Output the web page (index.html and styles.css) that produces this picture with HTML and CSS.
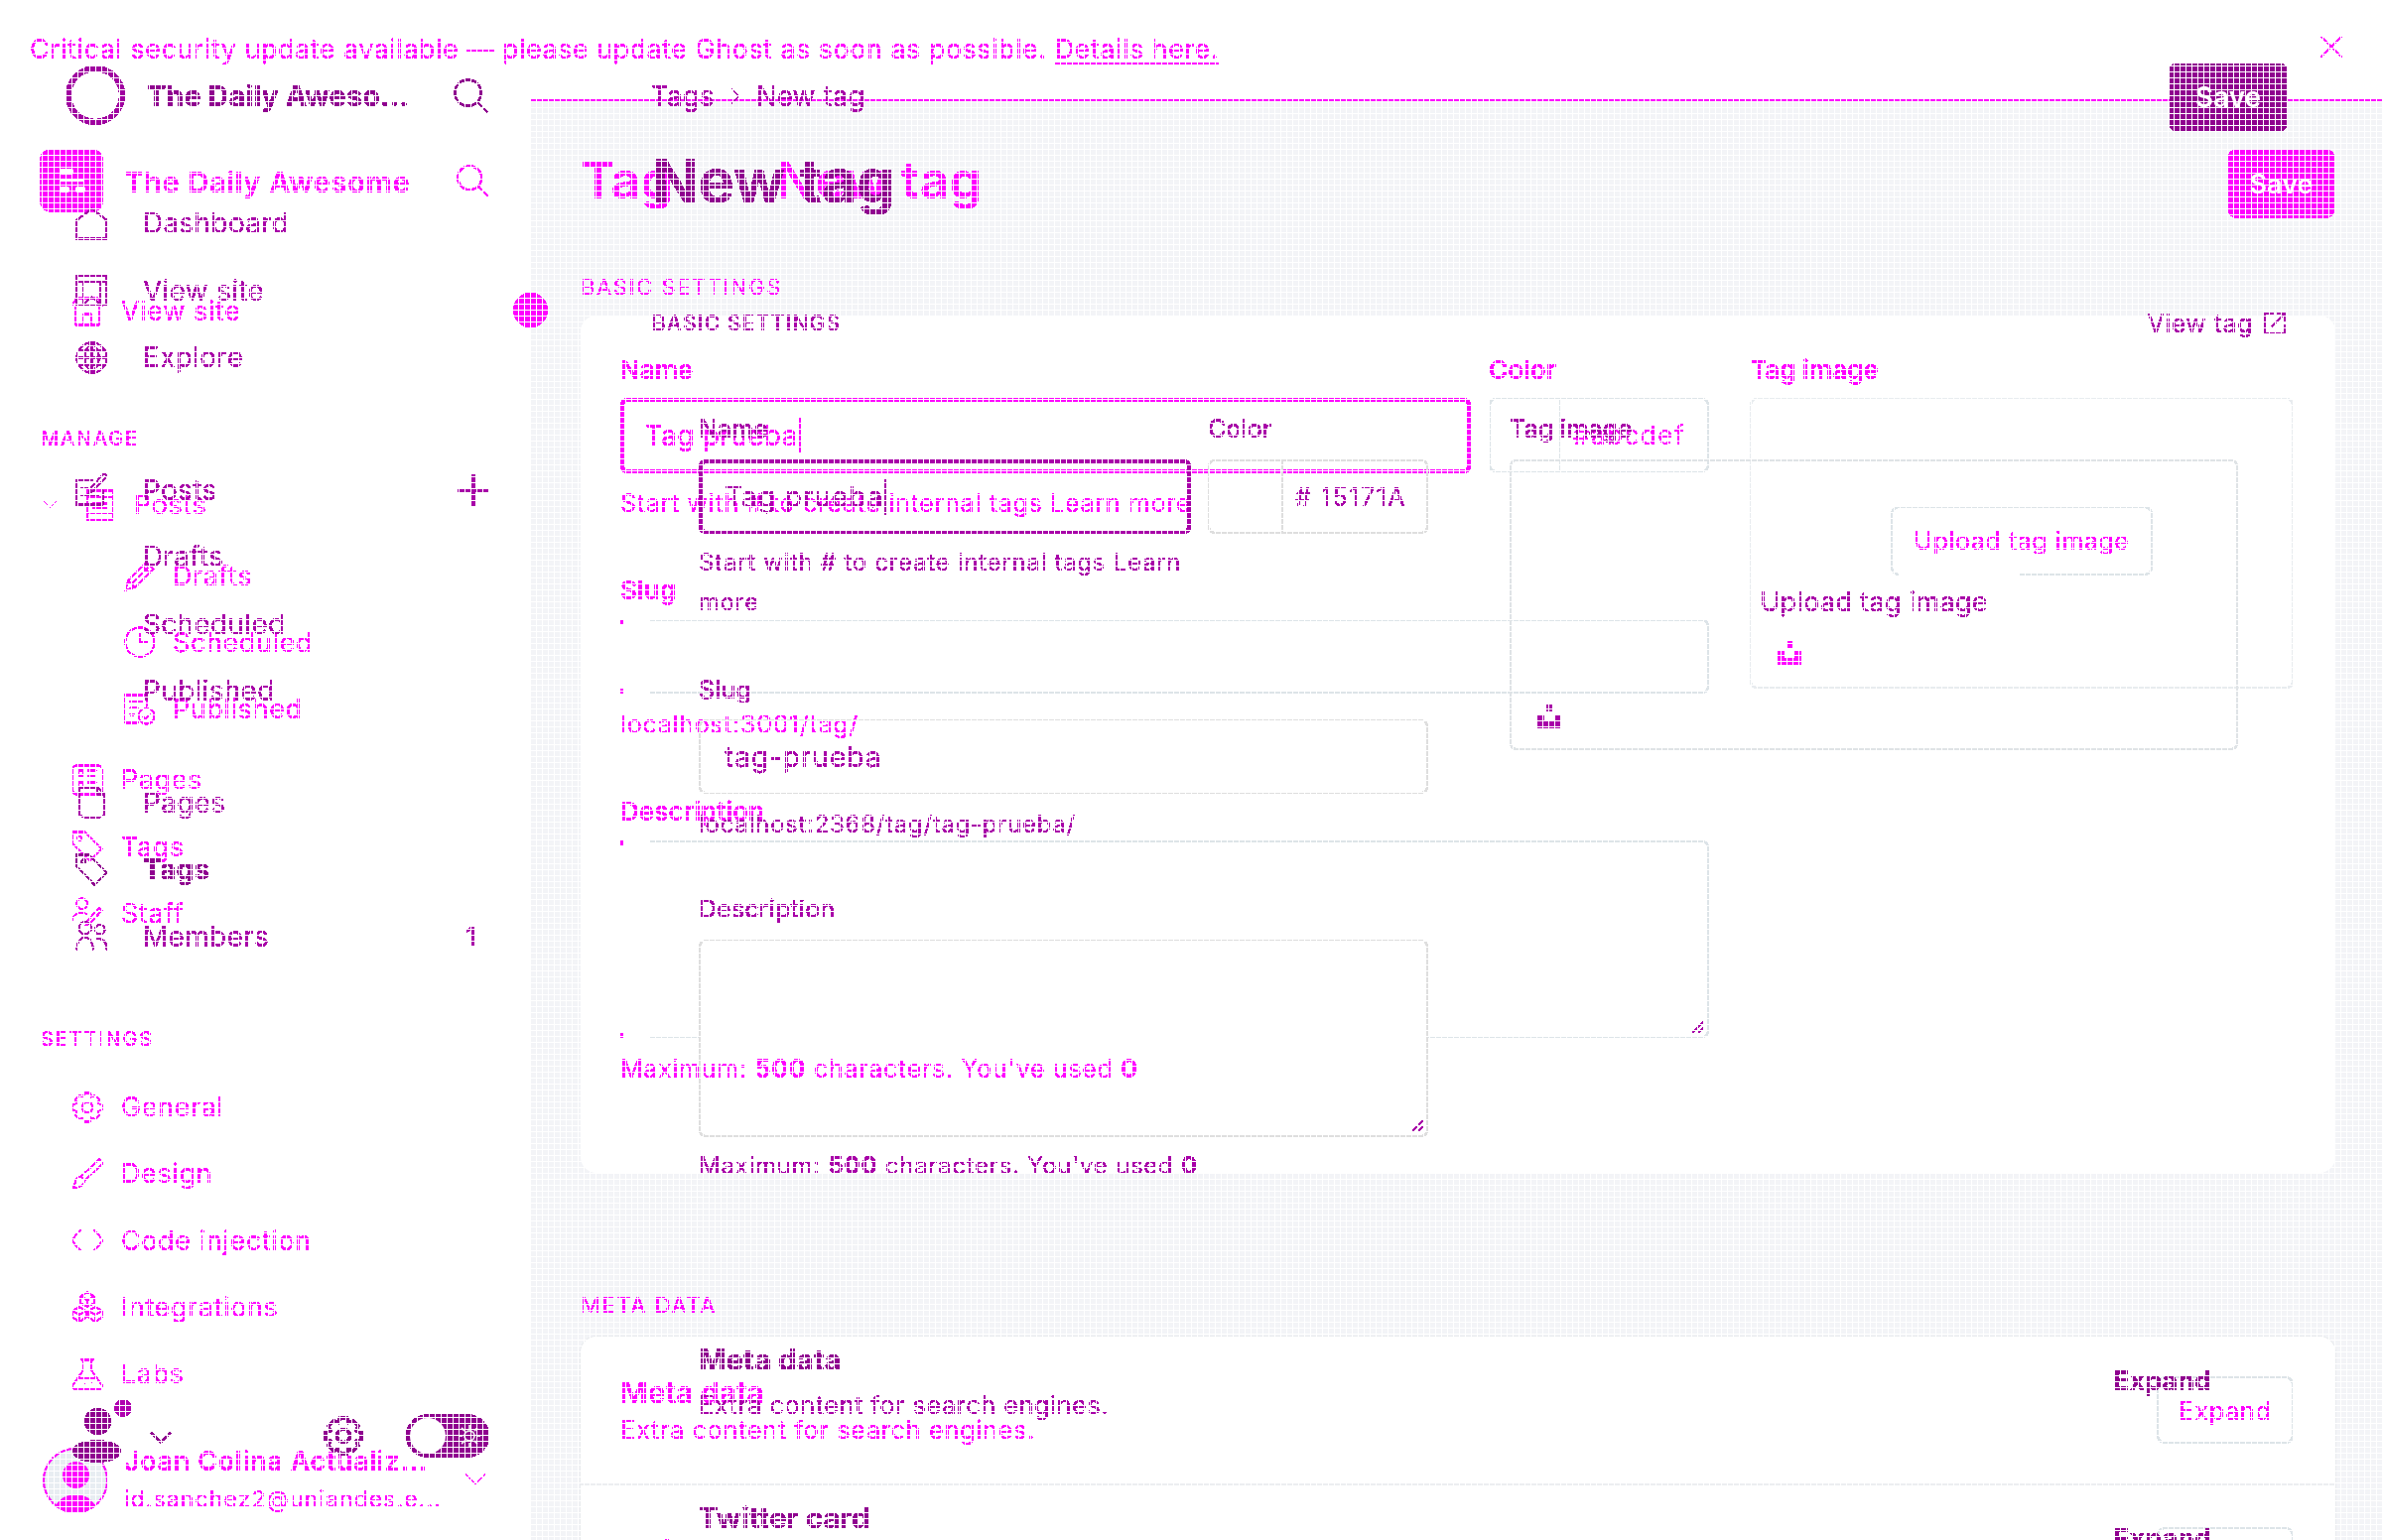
FILE: index.html
```html
<!DOCTYPE html>
<html lang="en">
<head>
<meta charset="utf-8">
<title>Visual diff: Ghost new tag</title>
<link rel="stylesheet" href="styles.css">
</head>
<body>
<svg class="defs" aria-hidden="true">
  <defs>
    <filter id="hard" color-interpolation-filters="sRGB" x="0" y="0" width="100%" height="100%">
      <feComponentTransfer><feFuncA type="discrete" tableValues="0 1 1 1"/></feComponentTransfer>
    </filter>
    <symbol id="i-home" viewBox="0 0 24 24"><path d="M1 9.500 12 1l11 8.500V23H1z"/></symbol>
    <symbol id="i-window" viewBox="0 0 24 24"><path d="M1 1.500h22v21H1zM1 5.500h22M6 5.500v17M18 5.500v17M6 22l6-5 6 5"/></symbol>
    <symbol id="i-store" viewBox="0 0 24 24"><path d="M0 8 4 2h16l4 6M3 8v14h18V8M9 22v-8h6v8"/></symbol>
    <symbol id="i-globe" viewBox="0 0 24 24"><circle cx="12" cy="12" r="11"/><path d="M1 12h22M2.500 7h19M2.500 17h19M12 1c-7 6-7 16 0 22M12 1c7 6 7 16 0 22M12 1v22"/></symbol>
    <symbol id="i-note" viewBox="0 0 24 24"><path d="M20 12v11H1V5h12M23 2l-10 11-3 1 1-3L21 0zM4 11h5M4 16h13"/></symbol>
    <symbol id="i-doc" viewBox="0 0 24 24"><path d="M2 1h20v22H2zM2 6h20M2 18h20M6 11h12M6 14h12"/></symbol>
    <symbol id="i-pencil" viewBox="0 0 24 24"><path d="M17 2 22 7 8 21 1 23l2-7zM14 5l5 5M3 16l5 5M6 18 18 6"/></symbol>
    <symbol id="i-clock" viewBox="0 0 24 24"><circle cx="12" cy="12" r="11"/><path d="M12 5v7h6"/></symbol>
    <symbol id="i-pub" viewBox="0 0 24 24"><path d="M11 22H1V1h16v9M4 6h10M4 11h7M4 16h4"/><circle cx="17" cy="17" r="6"/><path d="m14 17 2 2 4-4"/></symbol>
    <symbol id="i-layout" viewBox="0 0 24 24"><rect x="1" y="1" width="22" height="22" rx="3"/><path d="M5 5h4v4H5zM12 5h7M12 9h7M5 14h4v4H5zM12 14h7M12 18h7"/></symbol>
    <symbol id="i-page" viewBox="0 0 24 24"><path d="M3 1h13l5 5v15l-3 2H6l-3-2zM16 1v5h5"/></symbol>
    <symbol id="i-tag" viewBox="0 0 24 24"><path d="M1 1h9l13 13-9 9L1 10z"/><circle cx="6" cy="6" r="1.500"/></symbol>
    <symbol id="i-staff" viewBox="0 0 24 24"><circle cx="8" cy="5" r="4"/><path d="M0 20c0-5 3-8 8-8 2 0 3 .5 4 1M23 10l-9 10-3 1 1-3 9-10z"/></symbol>
    <symbol id="i-people" viewBox="0 0 24 24"><circle cx="7" cy="6" r="4.500"/><circle cx="18" cy="7" r="3.500"/><path d="M1 22c0-5 2-9 6-9s6 4 6 9M15 14c5-1 8 2 8 8"/></symbol>
    <symbol id="i-gear" viewBox="0 0 24 24"><circle cx="12" cy="12" r="4"/><path d="m10 1 4 0 1 3 3-1 3 3-1 3 3 1v4l-3 1 1 3-3 3-3-1-1 3h-4l-1-3-3 1-3-3 1-3-3-1v-4l3-1-1-3 3-3 3 1z"/></symbol>
    <symbol id="i-brush" viewBox="0 0 24 24"><path d="M21 1 24 4 10 17l-3-3zM7 14c-3 0-4 2-4 4 0 2-1 3-2 4 3 1 8 0 9-5"/></symbol>
    <symbol id="i-code" viewBox="0 0 24 24"><path d="M7 4 0 12l7 8M17 4l7 8-7 8"/></symbol>
    <symbol id="i-cubes" viewBox="0 0 24 24"><path d="m12 1 5 3v5l-5 3-5-3V4zM7 4l5 3 5-3M12 7v5M6 12l5 3v5l-5 3-5-3v-5zM1 15l5 3 5-3M6 18v5M18 12l5 3v5l-5 3-5-3v-5zM13 15l5 3 5-3M18 18v5"/></symbol>
    <symbol id="i-flask" viewBox="0 0 24 24"><path d="M7 1h10M9 1v8L1 20c-1 2 0 3 2 3h18c2 0 3-1 2-3L15 9V1M5 15h14M9 19h1M15 18h1"/></symbol>
    <symbol id="i-chev" viewBox="0 0 24 24"><path d="m1 6 11 11L23 6"/></symbol>
    <symbol id="i-plus" viewBox="0 0 24 24"><path d="M12 1v22M1 12h22"/></symbol>
    <symbol id="i-search" viewBox="0 0 24 24"><circle cx="10" cy="10" r="9"/><path d="m16.500 16.500 7 7"/></symbol>
    <symbol id="i-x" viewBox="0 0 24 24"><path d="m2 2 20 20M22 2 2 22"/></symbol>
    <symbol id="i-ext" viewBox="0 0 24 24"><path d="M11 2H2v20h20v-9M9 15 22 2M14 2h8v8"/></symbol>
    <symbol id="i-sun" viewBox="0 0 24 24"><circle cx="12" cy="12" r="5"/><path d="M12 1v4M12 19v4M1 12h4M19 12h4M4 4l3 3M17 17l3 3M4 20l3-3M17 7l3-3"/></symbol>
    <symbol id="i-up" viewBox="0 0 24 24"><path d="M9 0h6v7H9zM0 10h7v7h10v-7h7v14H0z"/></symbol>
    <symbol id="i-grip" viewBox="0 0 12 12"><path d="M11 1 1 11M11 6l-5 5"/></symbol>
  </defs>
</svg>

<div class="stage">

  <div class="base">
    <div class="surface">
      <div class="sheet sheet-basic"></div>
      <div class="sheet sheet-meta"></div>
    </div>
  </div>

  <div class="ink ink-a">
    <div class="banner">
      <p class="banner-text">Critical security update available — please update Ghost as soon as possible. <a class="banner-link" href="#">Details here.</a></p>
      <svg class="ico ico-close"><use href="#i-x"/></svg>
    </div>
    <div class="shell">
      <aside class="side side-a">
        <div class="brand-a">
          <div class="logo-a">
            <span class="logo-bar logo-bar-1"></span>
            <span class="logo-bar logo-bar-2"></span>
            <span class="logo-row"><span class="logo-bar logo-bar-3"></span><span class="logo-bar logo-bar-3"></span></span>
          </div>
          <span class="brand-name-a">The Daily Awesome</span>
          <svg class="ico ico-search-a"><use href="#i-search"/></svg>
        </div>
        <a class="nav-a nav-a-first"><svg class="ico"><use href="#i-store"/></svg>View site</a>
        <h3 class="sect-a sect-a-manage">MANAGE</h3>
        <a class="nav-a nav-a-posts"><svg class="ico ico-chev-a"><use href="#i-chev"/></svg><svg class="ico"><use href="#i-doc"/></svg>Posts</a>
        <a class="nav-a nav-a-sub nav-a-drafts"><svg class="ico"><use href="#i-pencil"/></svg>Drafts</a>
        <a class="nav-a nav-a-sub"><svg class="ico"><use href="#i-clock"/></svg>Scheduled</a>
        <a class="nav-a nav-a-sub"><svg class="ico"><use href="#i-pub"/></svg>Published</a>
        <a class="nav-a nav-a-pages"><svg class="ico"><use href="#i-layout"/></svg>Pages</a>
        <a class="nav-a"><svg class="ico"><use href="#i-tag"/></svg>Tags</a>
        <a class="nav-a"><svg class="ico"><use href="#i-staff"/></svg>Staff</a>
        <h3 class="sect-a sect-a-settings">SETTINGS</h3>
        <a class="nav-a"><svg class="ico"><use href="#i-gear"/></svg>General</a>
        <a class="nav-a"><svg class="ico"><use href="#i-brush"/></svg>Design</a>
        <a class="nav-a"><svg class="ico"><use href="#i-code"/></svg>Code injection</a>
        <a class="nav-a"><svg class="ico"><use href="#i-cubes"/></svg>Integrations</a>
        <a class="nav-a"><svg class="ico"><use href="#i-flask"/></svg>Labs</a>
        <div class="user-a">
          <div class="avatar-a"><span class="avatar-head"></span><span class="avatar-body"></span></div>
          <div class="user-text-a">
            <strong class="user-name-a">Joan Colina Actualiz...</strong>
            <span class="user-mail-a">id.sanchez2@uniandes.e...</span>
          </div>
          <svg class="ico ico-chev-user"><use href="#i-chev"/></svg>
        </div>
        <span class="side-dot"></span>
      </aside>
      <main class="main-a">
        <div class="head-a">
          <h1 class="title-a"><span class="title-a-first">Tag</span>New tag</h1>
          <button class="save-a">Save</button>
        </div>
        <h2 class="cap-a cap-a-basic">BASIC SETTINGS</h2>
        <section class="card-a">
          <div class="col-a-left">
            <div class="row-a-top">
              <div class="field-name-a">
                <label class="lab-a">Name</label>
                <div class="inp-a inp-a-focus">Tag prueba<span class="caret"></span></div>
                <p class="hint-a">Start with # to create internal tags Learn more</p>
              </div>
              <div class="field-color-a">
                <label class="lab-a">Color</label>
                <div class="inp-a inp-color-a"><span class="swatch-a"></span><span class="hex-a">#abcdef</span></div>
              </div>
            </div>
            <label class="lab-a lab-a-slug">Slug</label>
            <div class="inp-a inp-a-open"></div>
            <p class="hint-a hint-a-url">localhost:3001/tag/</p>
            <label class="lab-a lab-a-desc">Description</label>
            <div class="area-a inp-a-open"><svg class="grip"><use href="#i-grip"/></svg></div>
            <p class="hint-a hint-a-max">Maximum: <b>500</b> characters. You've used <b>0</b></p>
          </div>
          <div class="col-a-right">
            <label class="lab-a">Tag image</label>
            <div class="img-a">
              <span class="upload-a">Upload tag image</span>
              <svg class="ico ico-up ico-up-a"><use href="#i-up"/></svg>
            </div>
          </div>
        </section>
        <h2 class="cap-a cap-a-meta">META DATA</h2>
        <section class="card-a-meta">
          <div class="exp-a">
            <div><strong class="exp-title-a">Meta data</strong><p class="exp-sub-a">Extra content for search engines.</p></div>
            <span class="exp-btn-a">Expand</span>
          </div>
          <div class="exp-a exp-a-next">
            <div><strong class="exp-title-a">Twitter card</strong></div>
            <span class="exp-btn-a">Expand</span>
          </div>
        </section>
      </main>
    </div>
  </div>

  <div class="ink ink-b">
    <aside class="side side-b">
      <div class="brand-b">
        <span class="ring-b"></span>
        <span class="brand-name-b">The Daily Aweso...</span>
        <svg class="ico ico-search-b"><use href="#i-search"/></svg>
      </div>
      <a class="nav-b nav-b-first"><svg class="ico"><use href="#i-home"/></svg>Dashboard</a>
      <a class="nav-b"><svg class="ico"><use href="#i-window"/></svg>View site</a>
      <a class="nav-b"><svg class="ico"><use href="#i-globe"/></svg>Explore</a>
      <a class="nav-b nav-b-posts"><svg class="ico"><use href="#i-note"/></svg>Posts<svg class="ico ico-plus"><use href="#i-plus"/></svg></a>
      <a class="nav-b nav-b-sub">Drafts</a>
      <a class="nav-b nav-b-sub">Scheduled</a>
      <a class="nav-b nav-b-sub">Published</a>
      <a class="nav-b nav-b-pages"><svg class="ico"><use href="#i-page"/></svg>Pages</a>
      <a class="nav-b nav-b-on"><svg class="ico"><use href="#i-tag"/></svg>Tags</a>
      <a class="nav-b"><svg class="ico"><use href="#i-people"/></svg>Members<span class="count-b">1</span></a>
      <div class="foot-b">
        <div class="who-b"><span class="who-dot"></span><span class="who-head"></span><span class="who-body"></span></div>
        <svg class="ico ico-chev-b"><use href="#i-chev"/></svg>
        <svg class="ico ico-gear-b"><use href="#i-gear"/></svg>
        <div class="toggle-b"><span class="knob-b"></span><svg class="ico ico-sun"><use href="#i-sun"/></svg></div>
      </div>
    </aside>
    <main class="main-b">
      <div class="head-b">
        <span class="crumb-b">Tags<svg class="ico ico-crumb"><use href="#i-chev"/></svg>New tag</span>
        <button class="save-b">Save</button>
      </div>
      <h1 class="title-b">New tag</h1>
      <div class="cap-row-b">
        <h2 class="cap-b">BASIC SETTINGS</h2>
        <a class="view-b">View tag<svg class="ico ico-ext"><use href="#i-ext"/></svg></a>
      </div>
      <section class="card-b">
        <div class="col-b-left">
          <div class="row-b-top">
            <div class="field-name-b">
              <label class="lab-b">Name</label>
              <div class="inp-b inp-b-focus">Tag prueba<span class="caret"></span></div>
              <p class="hint-b hint-b-wrap">Start with # to create internal tags Learn more</p>
            </div>
            <div class="field-color-b">
              <label class="lab-b">Color</label>
              <div class="inp-b inp-color-b"><span class="swatch-b"></span><span class="hex-b"># 15171A</span></div>
            </div>
          </div>
          <label class="lab-b lab-b-slug">Slug</label>
          <div class="inp-b">tag-prueba</div>
          <p class="hint-b hint-b-url">localhost:2368/tag/tag-prueba/</p>
          <label class="lab-b lab-b-desc">Description</label>
          <div class="area-b"><svg class="grip"><use href="#i-grip"/></svg></div>
          <p class="hint-b hint-b-max">Maximum: <b>500</b> characters. You've used <b>0</b></p>
        </div>
        <div class="col-b-right">
          <label class="lab-b">Tag image</label>
          <div class="img-b">
            <span class="upload-b">Upload tag image</span>
            <svg class="ico ico-up ico-up-b"><use href="#i-up"/></svg>
          </div>
        </div>
      </section>
      <section class="meta-b">
        <div class="exp-b">
          <div><strong class="exp-title-b">Meta data</strong><p class="exp-sub-b">Extra content for search engines.</p></div>
          <span class="exp-btn-b">Expand</span>
        </div>
        <div class="exp-b exp-b-next">
          <div><strong class="exp-title-b">Twitter card</strong></div>
          <span class="exp-btn-b">Expand</span>
        </div>
      </section>
    </main>
  </div>

  <div class="sieve"></div>
</div>
</body>
</html>
```

FILE: styles.css
```css
* { box-sizing: border-box; }
html, body { margin: 0; padding: 0; background: #fff; }
body { font-family: Inter, "Liberation Sans", sans-serif; }
h1, h2, h3, p { margin: 0; font-weight: inherit; }
a { color: inherit; text-decoration: none; }
button { font: inherit; border: 0; padding: 0; }
.defs { position: absolute; width: 0; height: 0; }

.stage { position: relative; width: 2400px; height: 1552px; overflow: hidden; background: #fff; }

/* Surfaces under both inks */
.base { position: absolute; inset: 0; padding: 102px 0 0 535px; }
.surface { height: 100%; background: #f3f4f7; padding: 216px 47px 0 50px; }
.sheet { background: #fff; border-radius: 16px; }
.sheet-basic { height: 864px; }
.sheet-meta { height: 400px; margin-top: 165px; box-shadow: 0 0 0 1px #e9ebee; }

/* Inks: thresholded like a pixel diff */
.ink { position: absolute; inset: 0; filter: url(#hard); }
.ink-a { display: flex; flex-direction: column; color: #f0f; }
.ink-b { display: flex; color: #a800a8; }

.ico { display: block; flex: none; width: 32px; height: 32px; fill: none; stroke: currentColor; stroke-width: 1.300; overflow: visible; }

/* Sieve: the diff samples every sixth row and column */
.sieve {
  position: absolute; inset: 0; pointer-events: none;
  background-image:
    repeating-linear-gradient(90deg, #fff 0 1px, transparent 1px 6px),
    repeating-linear-gradient(180deg, #fff 0 1px, transparent 1px 6px);
}

/* ---------- Ink A ---------- */
.banner { flex: none; height: 100px; padding: 33px 38px 0 30px; display: flex; justify-content: space-between; align-items: flex-start; }
.banner-text { font-size: 27px; line-height: 34px; letter-spacing: .48px; }
.banner-link { text-decoration: underline; text-underline-offset: 4px; }
.ico-close { width: 26px; height: 26px; margin-top: 1px; stroke-width: 1.600; }

.shell { flex: 1; display: flex; min-height: 0; }
.side-a { position: relative; flex: none; width: 535px; padding: 50px 41px 0 40px; }
.brand-a { display: flex; align-items: center; height: 64px; }
.logo-a { flex: none; width: 64px; height: 64px; border-radius: 12px; background: #f0f; display: flex; flex-direction: column; justify-content: center; gap: 5px; padding-left: 20px; }
.logo-bar { display: block; height: 6px; background: #fff; border-radius: 2px; }
.logo-bar-1 { width: 14px; }
.logo-bar-2 { width: 25px; height: 2px; }
.logo-row { display: flex; gap: 6px; }
.logo-bar-3 { width: 10px; }
.brand-name-a { margin-left: 21px; margin-top: 3px; font-size: 29px; font-weight: 600; letter-spacing: .75px; white-space: nowrap; }
.ico-search-a { width: 32px; height: 32px; margin-left: auto; margin-right: 2px; stroke-width: 1.600; }

.nav-a { display: flex; align-items: center; gap: 18px; height: 67.250px; padding-left: 32px; font-size: 27px; letter-spacing: .6px; }
.nav-a-first { margin-top: 66px; }
.nav-a-posts { margin-top: 18px; padding-left: 3px; }
.ico-chev-a { width: 15px; height: 15px; stroke-width: 1.600; margin-right: 9px; }
.nav-a-sub { padding-left: 85px; gap: 17px; }
.nav-a-drafts { margin-top: 4px; }
.nav-a-pages { margin-top: 4px; }
.sect-a { font-size: 20px; line-height: 30px; font-weight: 500; letter-spacing: 1.800px; margin: 0 0 0 1px; }
.sect-a-manage { margin-top: 80px; }
.sect-a-settings { margin-top: 78px; margin-bottom: 20px; }

.user-a { display: flex; align-items: center; margin-top: 40px; height: 67px; padding-left: 3px; }
.avatar-a { position: relative; flex: none; width: 66px; height: 66px; border-radius: 50%; background: #e8edf2; overflow: hidden; box-shadow: inset 0 0 0 2px #f0f; }
.avatar-head { position: absolute; left: 20px; top: 14px; width: 27px; height: 27px; border-radius: 50%; background: #f0f; }
.avatar-body { position: absolute; left: 11px; top: 47px; width: 44px; height: 40px; border-radius: 50%; background: #f0f; }
.user-text-a { margin-left: 16px; display: flex; flex-direction: column; gap: 7px; white-space: nowrap; }
.user-name-a { font-size: 27px; line-height: 32px; font-weight: 600; letter-spacing: .6px; }
.user-mail-a { font-size: 23px; line-height: 30px; letter-spacing: 1.100px; }
.ico-chev-user { width: 22px; height: 22px; margin-left: auto; margin-right: 4px; margin-top: -1px; stroke-width: 1.600; }
.side-dot { position: absolute; right: -17px; top: 195px; width: 35px; height: 35px; border-radius: 50%; background: #f0f; }

.main-a { flex: 1; min-width: 0; border-top: 2px solid #f0f; padding: 48px 47px 0 50px; }
.head-a { display: flex; justify-content: space-between; height: 70px; }
.title-a { font-size: 52px; line-height: 64px; font-weight: 600; white-space: nowrap; }
.title-a-first { margin-right: 104px; }
.save-a { width: 109px; height: 70px; border-radius: 10px; background: #f0f; color: #fff; font-size: 27px; font-weight: 600; }
.cap-a { font-size: 22px; line-height: 30px; letter-spacing: 1.600px; }
.cap-a-basic { margin-top: 54px; }
.card-a { display: flex; gap: 41px; height: 864px; margin-top: 14px; padding: 40px 42px 0 40px; }
.col-a-left { flex: none; width: 1097px; }
.col-a-right { flex: 1; min-width: 0; }
.row-a-top { display: flex; gap: 18px; }
.field-name-a { flex: none; width: 857px; }
.field-color-a { flex: none; width: 222px; }
.lab-a { display: block; font-size: 26px; line-height: 30px; font-weight: 600; margin-bottom: 13px; }
.inp-a { height: 75px; border: 2px solid #dde4e8; border-radius: 7px; font-size: 28px; }
.inp-a-focus { display: flex; align-items: center; height: 76px; border: 4px solid #f0f; padding-left: 21px; letter-spacing: .3px; }
.caret { display: block; width: 2px; height: 36px; background: currentColor; margin-left: 1px; }
.inp-color-a { display: flex; align-items: stretch; }
.swatch-a { flex: none; width: 71px; border-right: 2px solid #dde4e8; }
.hex-a { align-self: center; margin-left: 12px; font-size: 26px; letter-spacing: 1.500px; white-space: nowrap; opacity: .75; }
.hint-a { font-size: 25px; line-height: 30px; letter-spacing: .7px; margin-top: 15px; white-space: nowrap; }
.hint-a b { font-weight: 700; }
.lab-a-slug { margin-top: 58px; margin-bottom: 14px; }
.hint-a-url { margin-top: 16px; }
.lab-a-desc { margin-top: 58px; margin-bottom: 14px; }
.hint-a-max { margin-top: 16px; }
.area-a { position: relative; height: 199px; border: 2px solid #dde4e8; border-radius: 7px; }

/* A's input outlines are broken where the diff saw no change */
.inp-a-open { position: relative; border-left: 0; }
.inp-a-open::before { content: ""; position: absolute; left: 0; top: -2px; bottom: -2px; width: 30px; background: #fff; }
.inp-a-open::after { content: ""; position: absolute; left: 0; top: -2px; bottom: -2px; width: 3px; background: linear-gradient(#f0f 0 5px, transparent 5px calc(100% - 5px), #f0f calc(100% - 5px)); }
.area-a.inp-a-open::before { width: 814px; background: linear-gradient(#fff, #fff) left top / 30px 100% no-repeat, linear-gradient(#fff, #fff) 79px 100% / 735px 2px no-repeat; }

.grip { position: absolute; right: 2px; bottom: 2px; width: 14px; height: 14px; fill: none; stroke: #a800a8; stroke-width: 1.600; }
.img-a { position: relative; height: 293px; display: flex; align-items: center; justify-content: center; border: 2px solid #e8ecef; border-radius: 7px; }
.upload-a { position: relative; display: flex; align-items: center; height: 70px; margin-top: -6px; padding: 0 22px; border: 2px solid #dde4e8; border-radius: 8px; font-size: 25px; letter-spacing: .55px; }
.upload-a::after { content: ""; position: absolute; left: 6px; bottom: -2px; width: 122px; height: 2px; background: #fff; }
.ico-up { width: 24px; height: 24px; fill: currentColor; stroke: none; }
.ico-up-a { position: absolute; left: 26px; bottom: 22px; }
.cap-a-meta { margin-top: 118px; }
.card-a-meta { margin-top: 16px; padding: 0 42px 0 40px; }
.exp-a { display: flex; justify-content: space-between; height: 151px; border-bottom: 2px solid #eceef1; margin: 0 -42px 0 -40px; padding: 41px 42px 0 40px; }
.exp-a-next { border: 0; padding-top: 50px; }
.exp-a-next .exp-btn-a { margin-top: -8px; }
.exp-title-a { display: block; font-size: 30px; line-height: 32px; font-weight: 600; }
.exp-sub-a { margin-top: 7px; font-size: 25.500px; line-height: 30px; letter-spacing: .55px; }
.exp-btn-a { display: flex; align-items: center; justify-content: center; width: 138px; height: 68px; border: 2px solid #dde4e8; border-radius: 8px; font-size: 25.500px; letter-spacing: .5px; }

/* ---------- Ink B ---------- */
.side-b { flex: none; width: 535px; padding: 66px 41px 0 66px; }
.brand-b { display: flex; align-items: center; height: 60px; }
.ring-b { flex: none; width: 60px; height: 60px; border-radius: 50%; border: 6px solid #a000a0; }
.brand-name-b { margin-left: 22px; font-size: 29px; font-weight: 700; color: #8f008f; white-space: nowrap; }
.ico-search-b { width: 35px; height: 35px; margin-left: auto; margin-right: 2px; stroke-width: 1.500; color: #8f008f; }

.nav-b { display: flex; align-items: center; gap: 35px; height: 67.500px; margin-left: 10px; font-size: 28px; letter-spacing: .3px; }
.nav-b .ico { width: 33px; height: 33px; }
.nav-b-first { margin-top: 65.500px; }
.nav-b-posts { margin-top: 66px; }
.nav-b-sub { padding-left: 68px; }
.nav-b-pages { margin-top: 45px; }
.nav-b-on { font-weight: 700; color: #8f008f; }
.nav-b .ico-plus { width: 34px; height: 34px; margin-left: auto; stroke-width: 2.200; }
.count-b { margin-left: auto; margin-right: 14px; font-weight: 600; font-size: 26px; }

.foot-b { display: flex; align-items: center; margin-top: 432px; height: 64px; }
.who-b { position: relative; flex: none; width: 70px; height: 64px; }
.who-dot { position: absolute; left: 49px; top: 0; width: 18px; height: 18px; border-radius: 50%; background: #b000b0; }
.who-head { position: absolute; left: 19px; top: 9px; width: 27px; height: 27px; border-radius: 50%; background: #8f008f; }
.who-body { position: absolute; left: 7px; top: 41px; width: 49px; height: 23px; border-radius: 50%; background: #8f008f; }
.ico-chev-b { width: 22px; height: 22px; margin-left: 15px; margin-top: 14px; stroke-width: 2.600; color: #8f008f; }
.ico-gear-b { width: 40px; height: 40px; margin-left: 153px; margin-top: 10px; stroke-width: 2; color: #8f008f; }
.toggle-b { display: flex; align-items: center; justify-content: space-between; width: 84px; height: 44px; margin-left: auto; margin-right: 1px; margin-top: 11px; padding: 0 8px 0 4px; border-radius: 22px; background: #8f008f; }
.knob-b { display: block; width: 36px; height: 36px; border-radius: 50%; background: #fff; }
.ico-sun { width: 24px; height: 24px; stroke: #e9e9e9; stroke-width: 1.800; }

.main-b { flex: 1; min-width: 0; padding: 64px 96px 0 122px; }
.head-b { display: flex; justify-content: space-between; align-items: center; height: 68px; }
.crumb-b { display: flex; align-items: center; font-size: 28px; margin-top: -3px; margin-left: -1px; }
.ico-crumb { width: 16px; height: 16px; transform: rotate(-90deg); margin: 0 13px; stroke-width: 2; }
.save-b { width: 118px; height: 68px; border-radius: 6px; background: #8f008f; color: #fff; font-size: 28px; font-weight: 600; }
.title-b { margin-top: 14px; font-size: 61px; line-height: 72px; font-weight: 700; color: #8f008f; white-space: nowrap; }
.cap-row-b { display: flex; justify-content: space-between; align-items: center; margin-top: 93px; height: 30px; }
.cap-b { font-size: 21px; line-height: 30px; letter-spacing: 1.200px; font-weight: 500; }
.view-b { display: flex; align-items: center; gap: 10px; font-size: 25px; letter-spacing: .5px; }
.ico-ext { width: 24px; height: 24px; stroke-width: 2.200; }
.card-b { display: flex; gap: 82px; padding: 76px 0 0 47px; }
.col-b-left { flex: none; width: 735px; }
.col-b-right { flex: none; width: 734px; }
.row-b-top { display: flex; gap: 17px; }
.field-name-b { flex: none; width: 496px; }
.field-color-b { flex: none; width: 222px; }
.lab-b { display: block; font-size: 25px; line-height: 30px; font-weight: 500; margin-bottom: 16px; }
.inp-b { display: flex; align-items: center; height: 75px; padding-left: 24px; border: 2px solid #dedede; border-radius: 7px; font-size: 28.500px; letter-spacing: .7px; }
.inp-b-focus { border: 4px solid #a800a8; padding-left: 22px; }
.inp-color-b { padding-left: 0; }
.swatch-b { align-self: stretch; flex: none; width: 74px; border-right: 2px solid #dedede; }
.hex-b { margin-left: 12px; font-size: 25px; letter-spacing: 1.500px; white-space: nowrap; }
.hint-b { font-size: 24px; line-height: 40px; letter-spacing: .72px; }
.hint-b b { font-weight: 700; }
.hint-b-wrap { margin-top: 9px; }
.lab-b-slug { margin-top: 53px; margin-bottom: 15px; }
.hint-b-url { margin-top: 11px; }
.lab-b-desc { margin-top: 50px; }
.area-b { position: relative; height: 199px; border: 2px solid #dedede; border-radius: 7px; }
.hint-b-max { margin-top: 9px; }
.img-b { position: relative; height: 293px; display: flex; align-items: center; justify-content: center; border: 2px solid #dfe3e6; border-radius: 7px; }
.upload-b { font-size: 27px; letter-spacing: .3px; margin-top: -6px; }
.ico-up-b { position: absolute; left: 26px; bottom: 20px; }
.meta-b { margin-top: 159px; padding-left: 47px; }
.exp-b { display: flex; justify-content: space-between; height: 159px; }
.exp-title-b { display: block; font-size: 29.500px; line-height: 32px; font-weight: 700; color: #8f008f; }
.exp-sub-b { margin-top: 15px; font-size: 25.500px; line-height: 30px; letter-spacing: .4px; }
.exp-btn-b { margin: 22px 76px 0 0; font-size: 27px; line-height: 32px; font-weight: 700; color: #8f008f; }
```
